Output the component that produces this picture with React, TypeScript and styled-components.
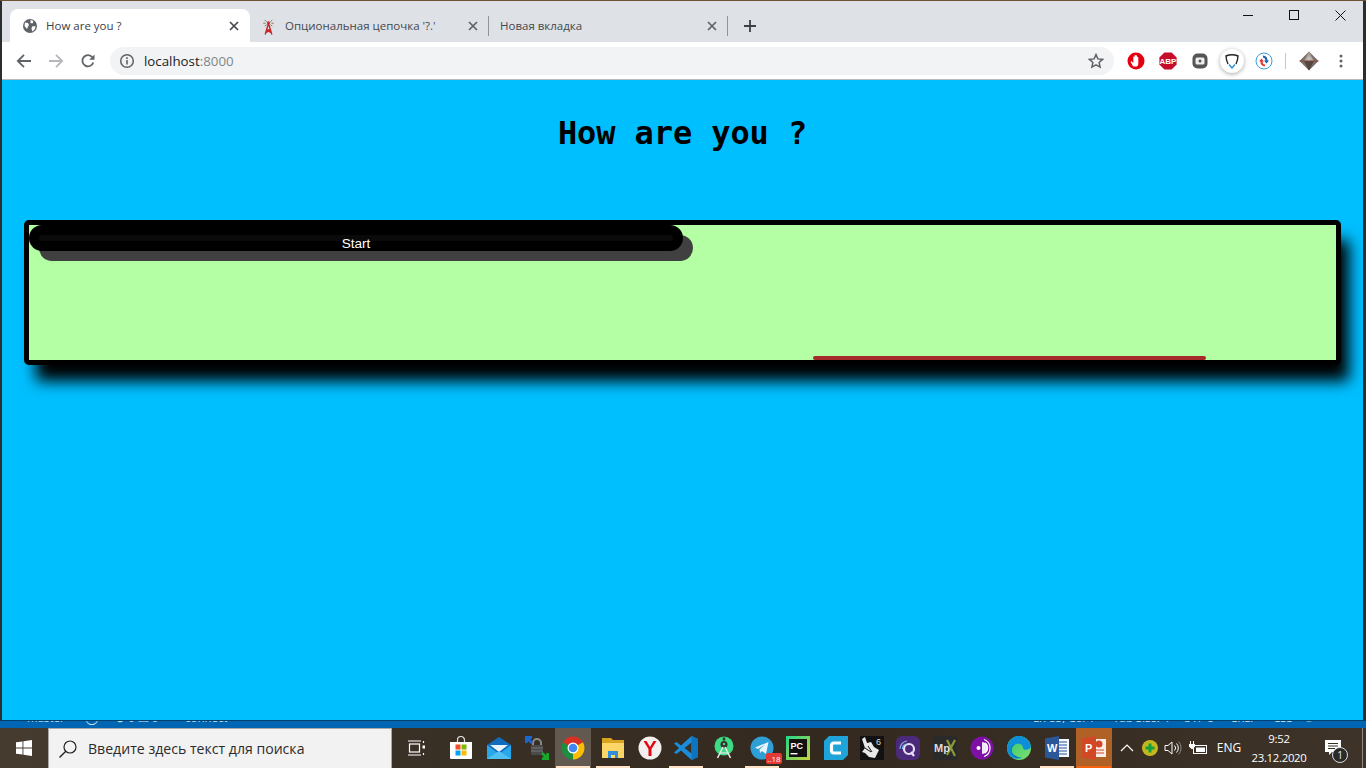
import React from "react";
import styled, { createGlobalStyle } from "styled-components";

const Global = createGlobalStyle`
  html, body { margin: 0; padding: 0; height: 100%; overflow: hidden; background: #2e2e2e; }
  * { box-sizing: border-box; }
`;

const Screen = styled.div`
  width: 1366px; height: 768px; display: flex; flex-direction: column; overflow: hidden;
  font-family: "Open Sans", "Noto Sans", sans-serif;
  background: #0065b2;
`;
const TopEdge = styled.div`height: 1px; background: #6f5030; flex: none;`;
const Win = styled.div`
  height: 720px; flex: none; display: flex; flex-direction: column;
  border-left: 2px solid #2d2d2d; border-right: 3px solid #2d2d2d; border-bottom: 1px solid #00406f;
`;
const TabStrip = styled.div`
  height: 41px; flex: none; background: #dee1e6; display: flex; align-items: flex-end; padding-left: 8px; position: relative;
`;
const Tab = styled.div<{ $active?: boolean; $sep?: boolean }>`
  width: ${p => (p.$active ? 240 : 239)}px; height: 33px; display: flex; align-items: center; padding: 0 8px 0 ${p => (p.$active ? 12 : 11)}px; position: relative;
  border-radius: 8px 8px 0 0; background: ${p => (p.$active ? "#fff" : "transparent")};
  &::after {
    content: ""; position: absolute; right: 0; top: 7px; height: 20px; width: 1px;
    background: ${p => (p.$sep ? "#90949a" : "transparent")};
  }
`;
const TabIcon = styled.span`width: 16px; height: 16px; margin-right: 8px; flex: none; display: flex;`;
const TabTitle = styled.span<{ $active?: boolean }>`
  flex: 1; font-size: 11.5px; color: ${p => (p.$active ? "#3c4043" : "#45484c")}; white-space: nowrap; overflow: hidden;
`;
const TabClose = styled.span`width: 16px; height: 16px; display: flex; flex: none;`;
const NewTab = styled.span`width: 16px; height: 16px; margin: 0 0 8px 14px; display: flex; align-self: flex-end;`;
const Controls = styled.div`margin-left: auto; display: flex; align-self: flex-start;`;
const Control = styled.span`width: 46px; height: 28px; display: flex; align-items: center; justify-content: center;`;

const Toolbar = styled.div`
  height: 38px; flex: none; background: #fff; border-bottom: 1px solid #b8babd; display: flex; align-items: center; padding: 1px 0 0 3px;
`;
const NavBtn = styled.span<{ $w?: number }>`
  width: ${p => p.$w ?? 32}px; height: 28px; flex: none; display: flex; align-items: center; justify-content: center;
`;
const Omni = styled.div`
  width: 1004px; height: 28px; margin: 0 6px 0 3px; background: #f1f3f4; border-radius: 14px; display: flex; align-items: center; padding: 0 10px 0 9px; flex: none;
`;
const UrlIcon = styled.span`width: 16px; height: 16px; margin-right: 9px; display: flex;`;
const Url = styled.span`flex: 1; font-size: 13.3px; color: #202124;`;
const Port = styled.span`color: #80868b;`;
const ShieldBack = styled.span`
  width: 24px; height: 24px; border-radius: 50%; background: #fff; box-shadow: 0 1px 4px rgba(0,0,0,.35); display: flex; align-items: center; justify-content: center;
`;
const ToolSep = styled.span`width: 1px; height: 16px; background: #c6c8ca; margin: 0 7px 0 5px; flex: none;`;

const Page = styled.main`
  flex: 1; background: #00bfff; padding: 34px 22px 0 22px; min-height: 0; overflow: hidden;
`;
const Heading = styled.h1`
  margin: 0 0 68px; text-align: center; font: bold 32px/38px "DejaVu Sans Mono", "Liberation Mono", monospace; color: #000; letter-spacing: -0.1px;
`;
const Track = styled.div`
  height: 145px; border: 5px solid #000; border-radius: 5px; background: #b4ffa3; box-shadow: 10px 18px 15px -2px #000; position: relative;
`;
const StartBtn = styled.div`
  width: 654px; height: 26px; border-radius: 13px; background: #000; color: #fff; position: relative;
  box-shadow: 10px 10px 0 #404040; text-align: center; font: 13.6px/16px "Liberation Sans", Arial, sans-serif; padding-top: 11px;
  &::before { content: ""; position: absolute; left: 10px; top: 10px; width: 634px; height: 6px; border-radius: 3px; background: #0a0a0a; }
  span { position: relative; }
`;
const Runner = styled.div`
  position: absolute; left: 784px; bottom: 0; width: 393px; height: 4px; background: #a52a2a; border-radius: 2px;
`;

const StatusBar = styled.div`
  height: 7px; flex: none; background: #0065b2; overflow: hidden; display: flex; align-items: flex-end; color: #d3e3f0; font: 11.5px/16px "Open Sans", sans-serif;
`;
const StatusItem = styled.span<{ $w: number }>`
  width: ${p => p.$w}px; flex: none; white-space: nowrap; margin-bottom: 2px; height: 16px;
`;

const Taskbar = styled.div`
  height: 40px; flex: none; display: flex; align-items: stretch; background: linear-gradient(90deg, #453b2f 0%, #3a3126 30%, #34291f 60%, #3d3328 100%); color: #fff;
`;
const Start = styled.span`width: 48px; display: flex; align-items: center; justify-content: center; flex: none;`;
const Search = styled.div`
  width: 344px; flex: none; background: #f2f2f2; border: 1px solid #a8a8a8; border-bottom: none; display: flex; align-items: center; padding-left: 9px; color: #2b2b2b; font-size: 14.1px;
`;
const SearchIcon = styled.span`width: 20px; height: 20px; margin-right: 10px; display: flex;`;
const Slot = styled.span<{ $ml?: number; $open?: boolean; $active?: boolean; $ppt?: boolean }>`
  width: 36px; flex: none; margin-left: ${p => p.$ml ?? 0}px; display: flex; align-items: center; justify-content: center; position: relative;
  background: ${p => (p.$ppt ? "#b06226" : p.$active ? "#625a50" : "transparent")};
  &::after {
    content: ""; position: absolute; left: 1px; right: 1px; bottom: 0; height: 2px;
    background: ${p => (p.$ppt ? "#f7630c" : p.$open ? "#ffe2c4" : "transparent")};
  }
`;
const TrayCell = styled.span<{ $w: number }>`
  width: ${p => p.$w}px; flex: none; display: flex; flex-direction: column; align-items: center; justify-content: center; font-size: 12px; line-height: 18px; position: relative;
`;
const ClockCell = styled(TrayCell)`font-size: 11.4px; letter-spacing: -0.3px; line-height: 19px;`;
const ShowDesktop = styled.span`width: 1px; margin: 0 0 0 7px; flex: none; background: #8f8a84;`;
const NoticeBadge = styled.span`
  position: absolute; left: 21px; top: 19px; width: 16px; height: 16px; border-radius: 50%; background: #2b2b2b; border: 1px solid #ddd; color: #eee; font-size: 10px; line-height: 14px; text-align: center;
`;
const TgBadge = styled.span`
  position: absolute; right: -2px; bottom: 4px; width: 16px; height: 11px; border-radius: 2px; background: #e53935; color: #fff; font-size: 8px; line-height: 11px; text-align: center;
`;

const X = ({ c = "#5f6368" }: { c?: string }) => (
  <svg width="16" height="16" viewBox="0 0 16 16"><path d="M4 4l8 8M12 4l-8 8" stroke={c} strokeWidth="1.7" /></svg>
);
const Globe = () => (
  <svg width="16" height="16" viewBox="0 0 16 16"><circle cx="8" cy="8" r="7" fill="#5f6368" />
    <path d="M3 4.5l3 .5 1 2-1 1.5-1 2.5-2.5-3zM8.5 2l3 1-1 2.5-2-.5zM10 8.5l3.5-.5-.5 3-2.5 2.5-1-2.5z" fill="#fff" /></svg>
);
const Tower = () => (
  <svg width="18" height="18" viewBox="0 0 18 18" style={{ marginLeft: -1 }}>
    <path d="M9 5L5.5 17M9 5l3.5 12M6.8 12h4.4M6 15l5.5-3M12 15l-5.5-3" stroke="#c62828" strokeWidth="1.5" fill="none" />
    <circle cx="9" cy="4.5" r="1.6" fill="#c62828" />
    <path d="M5 1.5l2 2M13 1.5l-2 2M3.5 5h2.5M14.5 5H12M5 8l2-1.5M13 8l-2-1.5" stroke="#8d6e63" strokeWidth="1" />
  </svg>
);
const Arrow = ({ c, flip }: { c: string; flip?: boolean }) => (
  <svg width="16" height="16" viewBox="0 0 16 16" style={flip ? { transform: "scaleX(-1)" } : undefined}>
    <path d="M15 8H2M8 1.8L1.8 8 8 14.2" stroke={c} strokeWidth="1.8" fill="none" /></svg>
);
const Reload = () => (
  <svg width="16" height="16" viewBox="0 0 16 16">
    <path d="M13.3 9.5a5.6 5.6 0 1 1-.9-5.2" stroke="#5f6368" strokeWidth="1.8" fill="none" />
    <path d="M14.5 1.5v5.3H9.2z" fill="#5f6368" /></svg>
);
const Info = () => (
  <svg width="16" height="16" viewBox="0 0 16 16"><circle cx="8" cy="8" r="6.3" fill="none" stroke="#5f6368" strokeWidth="1.5" />
    <path d="M8 7v4.5M8 4.3v1.6" stroke="#5f6368" strokeWidth="1.6" /></svg>
);
const Star = () => (
  <svg width="16" height="16" viewBox="0 0 16 16"><path d="M8 1.6l1.9 4.3 4.7.5-3.5 3.1 1 4.6L8 11.8l-4.1 2.3 1-4.6L1.4 6.4l4.7-.5z" fill="none" stroke="#5f6368" strokeWidth="1.5" /></svg>
);
const Hand = () => (
  <svg width="18" height="18" viewBox="0 0 18 18">
    <circle cx="9" cy="9" r="8.5" fill="#e4000f" />
    <path d="M6.200 14.500L3.800 10.200c-.4-.8.5-1.400 1.100-.8L6.300 11V5.200c0-.9 1.200-.9 1.200 0V8.300V3.600c0-.9 1.300-.9 1.300 0V8.300V4c0-.9 1.300-.9 1.300 0v4.600V5.500c0-.9 1.200-.9 1.200 0v6.200c0 1.200-.7 2.800-1.700 2.800z" fill="#fff" /></svg>
);
const Abp = () => (
  <svg width="18" height="18" viewBox="0 0 18 18"><path d="M5.4 .5h7.2l5 5v7l-5 5H5.4l-5-5v-7z" fill="#c70d2c" />
    <text x="9" y="12" textAnchor="middle" fontSize="8" fontWeight="700" fill="#fff" fontFamily="Liberation Sans">ABP</text></svg>
);
const CamIcon = () => (
  <svg width="16" height="16" viewBox="0 0 16 16"><rect x="0.5" y="0.5" width="15" height="15" rx="5" fill="#555" />
    <rect x="3.500" y="4.500" width="9" height="7" rx="1.500" fill="#eee" /><circle cx="8" cy="8" r="1.500" fill="#555" /></svg>
);
const Shield = () => (
  <svg width="16" height="16" viewBox="0 0 16 16"><path d="M4 11C2.700 8.400 2.200 6.500 2 3c4-1.600 8-1.600 12 0-.2 3.500-.7 5.400-2 8" fill="none" stroke="#222" strokeWidth="1.400" />
    <path d="M5 11.500L8 15l3-3.500" fill="none" stroke="#2d8fd6" strokeWidth="1.400" /></svg>
);
const Sync = () => (
  <svg width="18" height="18" viewBox="0 0 18 18"><circle cx="9" cy="9" r="8" fill="#fff" stroke="#3b9ed8" strokeWidth="1" />
    <path d="M8 3.500a5 5 0 0 1 4.500 5l1.500 0-2.500 3L9 8.500h1.500A3 3 0 0 0 8 5.500z" fill="#1f5fa5" />
    <path d="M10 14.500A5 5 0 0 1 5.500 9.500L4 9.500l2.500-3L9 9.500H7.500a3 3 0 0 0 2.500 3z" fill="#e53935" /></svg>
);
const Gem = () => (
  <svg width="20" height="20" viewBox="0 0 20 20"><path d="M10 .5L19.500 10 10 19.500.5 10z" fill="#7a6e68" />
    <path d="M10 .5L15 10H5z" fill="#a8a09a" /><path d="M5 10l5 9.500L15 10z" fill="#54463e" /><path d="M7 8l3-3 3 3-3 2z" fill="#c4bcb6" /><path d="M.5 10H19.500" stroke="#8f3d33" strokeWidth=".8" /></svg>
);
const Dots = () => (
  <svg width="16" height="16" viewBox="0 0 16 16"><circle cx="8" cy="3" r="1.500" fill="#5f6368" /><circle cx="8" cy="8" r="1.500" fill="#5f6368" /><circle cx="8" cy="13" r="1.500" fill="#5f6368" /></svg>
);
const WinLogo = () => (
  <svg width="16" height="16" viewBox="0 0 16 16"><path d="M0 2.300l6.500-.9v6.200H0zM7.400 1.300L16 0v7.600H7.400zM0 8.400h6.500v6.200L0 13.700zM7.400 8.400H16V16l-8.600-1.300z" fill="#fff" /></svg>
);
const Magnifier = () => (
  <svg width="20" height="20" viewBox="0 0 20 20"><circle cx="12" cy="8" r="6" fill="none" stroke="#222" strokeWidth="1.200" /><path d="M7.800 12.200L1.500 18.500" stroke="#222" strokeWidth="1.400" /></svg>
);
const TaskView = () => (
  <svg width="18" height="16" viewBox="0 0 18 16" fill="none" stroke="#fff" strokeWidth="1.200">
    <path d="M0 1h13M0 15h13" /><rect x="1.500" y="4" width="10" height="8" /><path d="M15.500 1v2M15.500 13v2" /><rect x="14.500" y="5.500" width="2.500" height="3" fill="#fff" stroke="none" /></svg>
);
const Store = () => (
  <svg width="24" height="24" viewBox="0 0 24 24"><path d="M8.500 6V4a3.500 3.500 0 0 1 7 0v2" fill="none" stroke="#ddd" strokeWidth="1.200" />
    <path d="M1 6h22v16a1 1 0 0 1-1 1H2a1 1 0 0 1-1-1z" fill="#fff" />
    <rect x="6.500" y="8.500" width="5" height="5" fill="#f25022" /><rect x="12.500" y="8.500" width="5" height="5" fill="#7fba00" />
    <rect x="6.500" y="14.500" width="5" height="5" fill="#00a4ef" /><rect x="12.500" y="14.500" width="5" height="5" fill="#ffb900" /></svg>
);
const Mail = () => (
  <svg width="24" height="24" viewBox="0 0 24 24"><path d="M12 1L24 9v14H0V9z" fill="#0f6cbd" /><path d="M0 9l12 9 12-9v14H0z" fill="#28a8ea" />
    <path d="M3 9h18l-9 7z" fill="#e8f4fd" /><path d="M0 23l12-8 12 8z" fill="#50c0f3" /></svg>
);
const LockApp = () => (
  <svg width="24" height="24" viewBox="0 0 24 24">
    <path d="M8 9V7a4 4 0 0 1 8 0v2" fill="none" stroke="#8a8a8a" strokeWidth="2" /><rect x="6" y="9" width="12" height="10" rx="1" fill="#4a4a4a" />
    <path d="M6 12h12M6 15h12" stroke="#777" /><path d="M0 0h7v2.500l-2 .5 3 3-2 2-3-3-.5 2H0z" fill="#1967d2" />
    <path d="M24 24h-7v-2.500l2-.5-3-3 2-2 3 3 .5-2H24z" fill="#18a82e" /></svg>
);
const Chrome = () => (
  <svg width="24" height="24" viewBox="0 0 24 24"><path d="M12 12L2 6.300A11.500 11.500 0 0 1 22 6.300z" fill="#d93025" /><path d="M12 12L22 6.300A11.500 11.500 0 0 1 12 23.500z" fill="#fbbc04" />
    <path d="M12 12V23.500A11.500 11.500 0 0 1 2 6.300z" fill="#1e8e3e" /><circle cx="12" cy="12" r="5.500" fill="#fff" /><circle cx="12" cy="12" r="4.300" fill="#4285f4" /></svg>
);
const Folder = () => (
  <svg width="24" height="22" viewBox="0 0 24 22"><path d="M1 1h9l2 2h11v16H1z" fill="#d9a521" /><path d="M1 6h22v15H1z" fill="#fcd768" />
    <path d="M7 14h10v7H7z" fill="#2f8fd8" /><path d="M10 18h4v3h-4z" fill="#fcd768" /></svg>
);
const Yandex = () => (
  <svg width="24" height="24" viewBox="0 0 24 24"><circle cx="12" cy="12" r="11.500" fill="#f2f0ee" /><path d="M5.500 5l5 8v7h3v-7l5-8h-3l-3.500 6-3.500-6z" fill="#e30613" /></svg>
);
const VsCode = () => (
  <svg width="24" height="24" viewBox="0 0 24 24"><path d="M17.500 0L24 3v18l-6.500 3L7 14.500 2.500 18 0 16.500 5 12 0 7.500 2.500 6 7 9.500z" fill="#1a8cd8" />
    <path d="M17.500 6.500L10.500 12l7 5.500z" fill="#3a3126" /><path d="M17.500 0L24 3v18l-6.500 3z" fill="#0f74bf" /></svg>
);
const Android = () => (
  <svg width="22" height="24" viewBox="0 0 22 24"><circle cx="11" cy="10" r="9.500" fill="#3ddc84" />
    <circle cx="11" cy="8.500" r="3.500" fill="#333" /><circle cx="11" cy="8" r="1.200" fill="#3ddc84" />
    <path d="M10 11L4.500 22M12 11l5.500 11" stroke="#e8e8e8" strokeWidth="1.600" /><path d="M7 17h8" stroke="#e8e8e8" strokeWidth="1.200" /><rect x="9.800" y="1.500" width="2.400" height="3" fill="#333" /></svg>
);
const Telegram = () => (
  <svg width="24" height="24" viewBox="0 0 24 24"><circle cx="12" cy="12" r="11.500" fill="#2f9fd8" /><path d="M5 11.500L18.500 6l-2.500 12-4-3-2 2-.5-3.500 5.500-5-7 4.500z" fill="#e8f5fc" /></svg>
);
const PyCharm = () => (
  <svg width="24" height="24" viewBox="0 0 24 24"><defs><linearGradient id="pcg" x1="0" y1="0" x2="1" y2="1"><stop offset="0" stopColor="#21d789" /><stop offset="1" stopColor="#c9d43d" /></linearGradient></defs><rect width="24" height="24" fill="url(#pcg)" />
    <rect x="3" y="3" width="18" height="18" fill="#111" /><text x="4.500" y="13" fontSize="9" fontWeight="700" fill="#fff" fontFamily="Liberation Sans">PC</text><rect x="4.500" y="17" width="7" height="1.400" fill="#fff" /></svg>
);
const Cursor = () => (
  <svg width="24" height="24" viewBox="0 0 24 24"><path d="M5 0h19v19l-5 5H0V5z" fill="#1ea4d9" /><path d="M17 7H10a2.500 2.500 0 0 0-2.500 2.500v5A2.500 2.500 0 0 0 10 17h7" fill="none" stroke="#fff" strokeWidth="3.200" /></svg>
);
const Rhino = () => (
  <svg width="24" height="24" viewBox="0 0 24 24"><rect width="24" height="24" fill="#111" /><path d="M2 3l3-2 2 6 4-1 3 5 5 3-4 8-6-1-4-4-3-1 3-4z" fill="#e8e8e8" /><path d="M5 12l6 4M8 10l4 6" stroke="#111" />
    <text x="16" y="9" fontSize="9" fill="#ddd" fontFamily="Liberation Sans">6</text></svg>
);
const QApp = () => (
  <svg width="24" height="24" viewBox="0 0 24 24"><rect width="24" height="24" rx="6" fill="#4b2a7b" /><circle cx="13" cy="13" r="5" fill="none" stroke="#e8e0f4" strokeWidth="2.200" /><path d="M15 16l3 4" stroke="#e8e0f4" strokeWidth="2.200" />
    <path d="M4 13a8 8 0 0 1 7-8M6.500 13a5 5 0 0 1 4-5" fill="none" stroke="#7fb2e8" strokeWidth="1.200" /></svg>
);
const MpApp = () => (
  <svg width="24" height="24" viewBox="0 0 24 24"><rect width="24" height="24" fill="#2a2a2a" /><path d="M14 4l8 16M22 4l-8 15" stroke="#8a9a3a" strokeWidth="2.200" />
    <text x="1" y="16" fontSize="11" fontWeight="700" fill="#ddd" fontFamily="Liberation Sans">Mp</text></svg>
);
const Tor = () => (
  <svg width="24" height="24" viewBox="0 0 24 24"><circle cx="12" cy="12" r="11.500" fill="#7d11a6" /><path d="M12 6a6 6 0 0 1 0 12z" fill="#fff" opacity=".9" /><path d="M14 3.500a9 9 0 0 1 0 17M15 7a6 6 0 0 1 0 10" stroke="#fff" strokeWidth="1.200" fill="none" /><circle cx="8.500" cy="12" r="2" fill="#fff" /></svg>
);
const Edge = () => (
  <svg width="24" height="24" viewBox="0 0 24 24"><defs><linearGradient id="edg" x1="0" y1="0" x2="1" y2="1"><stop offset="0" stopColor="#2fc27a" /><stop offset="1" stopColor="#7fe36b" /></linearGradient></defs>
    <circle cx="12" cy="12" r="12" fill="url(#edg)" /><path d="M0 12C1 4 7 0 12 0c6 0 10 4 12 10 0 4-8 5-8 2 0-4-4-5-7-4-5 2-6 8-2 11 3 2.500 6 2.500 8 3-9 3-15-3-15-10z" fill="#0c8fd8" /><path d="M9 8c-5 2-6 8-2 11 3 2.500 6 2.500 8 3-6 .5-11-3-11-8 0-3 2-5.500 5-6z" fill="#0a5ea8" /></svg>
);
const Word = () => (
  <svg width="24" height="24" viewBox="0 0 24 24"><rect x="9" y="3" width="15" height="18" fill="#f5f8fc" /><path d="M12 6h10M12 9h10M12 12h10M12 15h10M12 18h10" stroke="#2b579a" /><path d="M0 2.500L14 0v24L0 21.500z" fill="#2b579a" /><text x="2" y="16" fontSize="11" fontWeight="700" fill="#fff" fontFamily="Liberation Sans">W</text></svg>
);
const Ppt = () => (
  <svg width="24" height="24" viewBox="0 0 24 24"><rect x="9" y="3" width="15" height="18" fill="#fbeee8" /><circle cx="17" cy="8" r="3.500" fill="#d24726" /><path d="M12 14h10M12 17h10" stroke="#d24726" /><path d="M0 2.500L14 0v24L0 21.500z" fill="#d24726" /><text x="3" y="16" fontSize="11" fontWeight="700" fill="#fff" fontFamily="Liberation Sans">P</text></svg>
);
const Chevron = () => (
  <svg width="14" height="10" viewBox="0 0 14 10"><path d="M1 8l6-6 6 6" fill="none" stroke="#fff" strokeWidth="1.200" /></svg>
);
const GreenPlus = () => (
  <svg width="16" height="16" viewBox="0 0 16 16"><circle cx="8" cy="8" r="8" fill="#c5b81e" /><path d="M8 0a8 8 0 0 1 0 16A8 8 0 0 0 8 0z" fill="#d9cd33" /><path d="M8 3.500v9M3.500 8h9" stroke="#15a03f" strokeWidth="3" /></svg>
);
const Speaker = () => (
  <svg width="18" height="16" viewBox="0 0 18 16" fill="none" stroke="#fff"><path d="M1 5.500h3L8 2v12L4 10.500H1z" /><path d="M10.500 5.500a3.500 3.500 0 0 1 0 5M12.500 3.500a6.500 6.500 0 0 1 0 9" /><path d="M14.500 1.500a9.500 9.500 0 0 1 0 13" stroke="#888" /></svg>
);
const Battery = () => (
  <svg width="20" height="14" viewBox="0 0 20 14" fill="none" stroke="#fff"><path d="M2.500 0v3M5.500 0v3" /><path d="M1 3h6v2.500L4.500 8h-1L1 5.500z" fill="#fff" stroke="none" /><rect x="5.500" y="4.500" width="13" height="8" /><rect x="8" y="6.500" width="9" height="4.500" fill="#fff" stroke="none" /></svg>
);
const Notice = () => (
  <svg width="18" height="18" viewBox="0 0 18 18"><path d="M1 1h16v12H8l-3 3v-3H1z" fill="#fff" /><path d="M4 4.500h10M4 7h10M4 9.500h7" stroke="#3a3126" /></svg>
);

const apps: { ml: number; el: React.ReactNode; open?: boolean; active?: boolean; ppt?: boolean; badge?: string }[] = [
  { ml: 7, el: <TaskView /> },
  { ml: 8, el: <Store /> },
  { ml: 2, el: <Mail /> },
  { ml: 2, el: <LockApp /> },
  { ml: 0, el: <Chrome />, open: true, active: true },
  { ml: 4, el: <Folder />, open: true },
  { ml: 1, el: <Yandex /> },
  { ml: 0, el: <VsCode />, open: true },
  { ml: 2, el: <Android /> },
  { ml: 2, el: <Telegram />, open: true, badge: "..18" },
  { ml: 0, el: <PyCharm /> },
  { ml: 2, el: <Cursor /> },
  { ml: 0, el: <Rhino /> },
  { ml: 0, el: <QApp /> },
  { ml: 1, el: <MpApp /> },
  { ml: 1, el: <Tor /> },
  { ml: 1, el: <Edge /> },
  { ml: 2, el: <Word />, open: true },
  { ml: 1, el: <Ppt />, ppt: true, open: true },
];

const status: [number, string][] = [
  [27, ""], [58, "master"], [30, "◯"], [70, "⊗ 0 ⚠ 0"], [848, "      connect"],
  [80, "Ln 85, Col 1"], [70, "Tab Size: 4"], [47, "UTF-8"], [43, "CRLF"], [30, "CSS"], [37, "☺"],
];

export default function App() {
  return (
    <Screen>
      <Global />
      <TopEdge />
      <Win>
        <TabStrip>
          <Tab $active>
            <TabIcon><Globe /></TabIcon>
            <TabTitle $active>How are you ?</TabTitle>
            <TabClose><X c="#45484c" /></TabClose>
          </Tab>
          <Tab $sep>
            <TabIcon><Tower /></TabIcon>
            <TabTitle>Опциональная цепочка '?.'</TabTitle>
            <TabClose><X /></TabClose>
          </Tab>
          <Tab $sep>
            <TabTitle>Новая вкладка</TabTitle>
            <TabClose><X /></TabClose>
          </Tab>
          <NewTab>
            <svg width="16" height="16" viewBox="0 0 16 16"><path d="M8 2v12M2 8h12" stroke="#3c4043" strokeWidth="1.800" /></svg>
          </NewTab>
          <Controls>
            <Control><svg width="10" height="10" viewBox="0 0 10 10"><path d="M0 5.500h10" stroke="#111" /></svg></Control>
            <Control><svg width="10" height="10" viewBox="0 0 10 10"><rect x=".5" y=".5" width="9" height="9" fill="none" stroke="#111" /></svg></Control>
            <Control><svg width="11" height="11" viewBox="0 0 11 11"><path d="M.5 .5l10 10M10.500 .5l-10 10" stroke="#111" /></svg></Control>
          </Controls>
        </TabStrip>
        <Toolbar>
          <NavBtn $w={38}><Arrow c="#5f6368" /></NavBtn>
          <NavBtn $w={26}><Arrow c="#b5b7ba" flip /></NavBtn>
          <NavBtn $w={38}><Reload /></NavBtn>
          <Omni>
            <UrlIcon><Info /></UrlIcon>
            <Url>localhost<Port>:8000</Port></Url>
            <Star />
          </Omni>
          <NavBtn $w={32}><Hand /></NavBtn>
          <NavBtn $w={32}><Abp /></NavBtn>
          <NavBtn $w={32}><CamIcon /></NavBtn>
          <NavBtn $w={32}><ShieldBack><Shield /></ShieldBack></NavBtn>
          <NavBtn $w={32}><Sync /></NavBtn>
          <ToolSep />
          <NavBtn $w={32}><Gem /></NavBtn>
          <NavBtn $w={32}><Dots /></NavBtn>
        </Toolbar>
        <Page>
          <Heading>How are you ?</Heading>
          <Track>
            <StartBtn><span>Start</span></StartBtn>
            <Runner />
          </Track>
        </Page>
      </Win>
      <StatusBar>
        {status.map(([w, t], i) => <StatusItem key={i} $w={w}>{t}</StatusItem>)}
      </StatusBar>
      <Taskbar>
        <Start><WinLogo /></Start>
        <Search>
          <SearchIcon><Magnifier /></SearchIcon>
          Введите здесь текст для поиска
        </Search>
        {apps.map((a, i) => (
          <Slot key={i} $ml={a.ml} $open={a.open} $active={a.active} $ppt={a.ppt}>
            {a.el}
            {a.badge && <TgBadge>{a.badge}</TgBadge>}
          </Slot>
        ))}
        <TrayCell $w={3} />
        <TrayCell $w={24}><Chevron /></TrayCell>
        <TrayCell $w={22}><GreenPlus /></TrayCell>
        <TrayCell $w={24}><Speaker /></TrayCell>
        <TrayCell $w={26}><Battery /></TrayCell>
        <TrayCell $w={36}>ENG</TrayCell>
        <ClockCell $w={64}><span>9:52</span><span>23.12.2020</span></ClockCell>
        <TrayCell $w={44}><Notice /><NoticeBadge>1</NoticeBadge></TrayCell>
        <ShowDesktop />
      </Taskbar>
    </Screen>
  );
}
